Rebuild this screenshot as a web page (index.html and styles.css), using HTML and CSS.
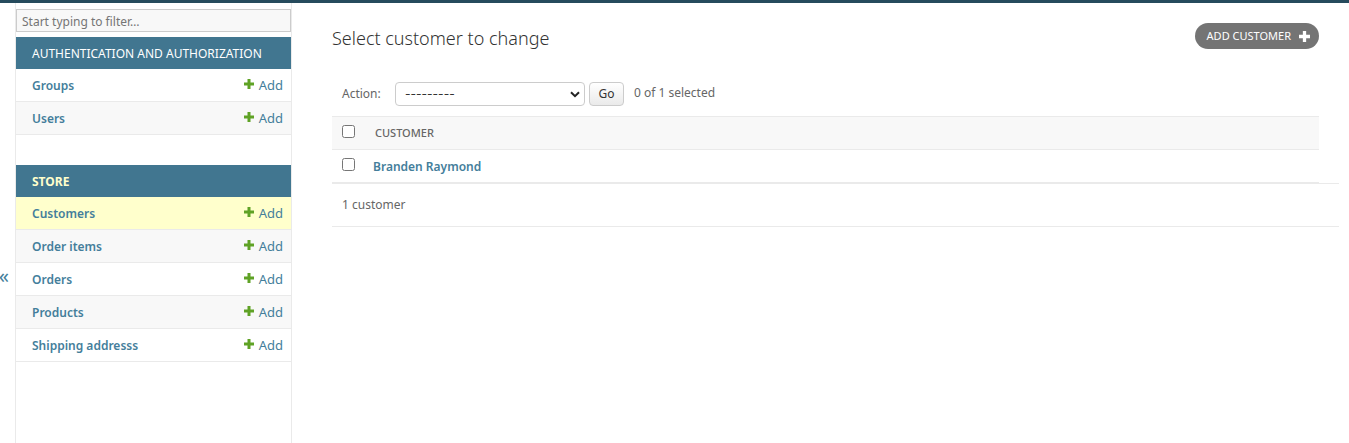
FILE: index.html
```html
<!DOCTYPE html>
<html lang="en">
<head>
<meta charset="utf-8">
<title>Select customer to change</title>
<link rel="stylesheet" href="styles.css">
</head>
<body>
<svg class="defs" aria-hidden="true"><symbol id="plus" viewBox="0 0 10 10"><path d="M3.5 0h3v3.5H10v3H6.500V10h-3V6.500H0v-3h3.500z"/></symbol></svg>
<header class="topbar"></header>
<div class="shell">
  <button class="nav-toggle" type="button" aria-label="Toggle navigation">«</button>
  <nav class="sidebar">
    <input class="filter" type="search" placeholder="Start typing to filter…" aria-label="Filter navigation items">
    <table class="module">
      <caption>AUTHENTICATION AND AUTHORIZATION</caption>
      <tbody>
      <tr><th scope="row"><a href="#">Groups</a></th><td><a class="add" href="#"><svg class="plus"><use href="#plus"/></svg>Add</a></td></tr>
      <tr><th scope="row"><a href="#">Users</a></th><td><a class="add" href="#"><svg class="plus"><use href="#plus"/></svg>Add</a></td></tr>
      </tbody>
    </table>
    <table class="module current-app">
      <caption>STORE</caption>
      <tbody>
      <tr class="current"><th scope="row"><a href="#">Customers</a></th><td><a class="add" href="#"><svg class="plus"><use href="#plus"/></svg>Add</a></td></tr>
      <tr><th scope="row"><a href="#">Order items</a></th><td><a class="add" href="#"><svg class="plus"><use href="#plus"/></svg>Add</a></td></tr>
      <tr><th scope="row"><a href="#">Orders</a></th><td><a class="add" href="#"><svg class="plus"><use href="#plus"/></svg>Add</a></td></tr>
      <tr><th scope="row"><a href="#">Products</a></th><td><a class="add" href="#"><svg class="plus"><use href="#plus"/></svg>Add</a></td></tr>
      <tr><th scope="row"><a href="#">Shipping addresss</a></th><td><a class="add" href="#"><svg class="plus"><use href="#plus"/></svg>Add</a></td></tr>
      </tbody>
    </table>
  </nav>
  <main class="content">
    <div class="heading">
      <h1>Select customer to change</h1>
      <a class="add-button" href="#">ADD CUSTOMER<svg class="plus"><use href="#plus"/></svg></a>
    </div>
    <form class="changelist">
      <div class="actions">
        <label for="action">Action:</label>
        <div class="select-wrap">
          <select id="action"><option>---------</option></select>
          <svg class="chevron" viewBox="0 0 10 7"><path d="M1 1.200l4 4 4-4"/></svg>
        </div>
        <button class="go" type="button">Go</button>
        <span class="counter">0 of 1 selected</span>
      </div>
      <table class="results">
        <thead><tr><th class="check"><input type="checkbox" aria-label="Select all customers"></th><th scope="col">CUSTOMER</th></tr></thead>
        <tbody><tr><td class="check"><input type="checkbox" aria-label="Select Branden Raymond"></td><th scope="row"><a href="#">Branden Raymond</a></th></tr></tbody>
      </table>
      <p class="paginator">1 customer</p>
    </form>
  </main>
</div>
</body>
</html>
```
FILE: styles.css
```css
* { box-sizing: border-box; }
body {
  display: flex;
  flex-direction: column;
  min-height: 100vh;
  margin: 0;
  background: #fff;
  color: #666;
  font: 12px/20px "Noto Sans", "Open Sans", sans-serif;
}
a { color: #447e9b; text-decoration: none; }
.defs { position: absolute; width: 0; height: 0; }
.topbar { height: 3px; background: #264b5d; }
.shell { display: flex; flex: 1; }

.nav-toggle {
  display: flex;
  justify-content: flex-end;
  align-items: center;
  width: 15px;
  padding: 106px 6px 0 0;
  border: 0;
  background: #fff;
  color: #447e9b;
  font: 20px/20px "Noto Sans", sans-serif;
}

.sidebar {
  flex: 0 0 277px;
  padding-top: 6px;
  border: solid #eaeaea;
  border-width: 0 1px;
}
.filter {
  display: block;
  width: 100%;
  height: 23px;
  margin-bottom: 5px;
  padding: 2px 5px 0;
  border: 1px solid #ccc;
  border-radius: 0;
  background: #f8f8f8;
  font: inherit;
  outline: 0;
}
.filter::placeholder { color: #757575; }
.module { width: 100%; margin-bottom: 30px; border-spacing: 0; }
.module caption {
  height: 32px;
  padding: 1px 16px 0;
  background: #417690;
  color: #fff;
  line-height: 31px;
  text-align: left;
  white-space: nowrap;
}
.current-app caption { color: #ffc; font-weight: 700; }
.module tr:nth-child(even) { background: #f8f8f8; }
.module .current { background: #ffc; }
.module th, .module td { height: 33px; border-bottom: 1px solid #eaeaea; }
.module th { padding: 1px 0 0 16px; font-weight: 600; text-align: left; }
.module td { padding: 0 8px 0 0; font-size: 13px; }
.add { display: flex; justify-content: flex-end; gap: 5px; }
.plus { width: 10px; height: 10px; fill: #5fa225; }
.add .plus { margin-top: 4px; }

.content { flex: 1; min-width: 0; padding: 20px 30px 20px 40px; }
.heading { display: flex; justify-content: space-between; align-items: flex-start; height: 59px; }
h1 { margin: 3px 0 0; font-size: 18px; font-weight: 300; line-height: 24px; color: #333; }
.add-button {
  display: flex;
  align-items: center;
  gap: 8px;
  height: 26px;
  padding: 0 9px 0 12px;
  border-radius: 13px;
  background: #747474;
  color: #fff;
  font-size: 11px;
}
.add-button .plus { width: 11px; height: 11px; fill: #fff; }

.actions { display: flex; align-items: center; height: 24px; margin-bottom: 10px; padding-left: 10px; }
.actions label { width: 53px; }
.select-wrap { display: flex; position: relative; width: 190px; margin-right: 4px; }
.select-wrap select {
  width: 100%;
  height: 24px;
  padding: 0 9px;
  border: 1px solid #ccc;
  border-radius: 4px;
  background: #fff;
  color: #333;
  font: 12px/20px Inter, sans-serif;
  appearance: none;
}
.chevron { position: absolute; top: 9px; right: 5px; width: 10px; height: 7px; fill: none; stroke: #222; stroke-width: 2; pointer-events: none; }
.go {
  width: 35px;
  height: 24px;
  margin-right: 10px;
  padding: 0;
  border: 1px solid #ccc;
  border-radius: 4px;
  background: linear-gradient(#fff, #eaeaea);
  color: #333;
  font: inherit;
}
.counter { padding-bottom: 3px; }

.results { width: 100%; border-spacing: 0; }
.results th, .results td { height: 33px; padding: 0 10px; border-bottom: 1px solid #eaeaea; text-align: left; vertical-align: middle; }
.results thead th { height: 34px; border-top: 1px solid #eaeaea; background: #f8f8f8; font-size: 11px; font-weight: 500; }
.results .check { width: 33px; padding: 0 0 4px 10px; }
.results .check input { display: block; width: 13px; height: 13px; margin: 0; }
.results tbody th { padding: 2px 8px 0; font-weight: 600; }
.paginator { margin: 0 -20px 0 0; padding: 11px 10px; border: solid #eaeaea; border-width: 1px 0; }
```
